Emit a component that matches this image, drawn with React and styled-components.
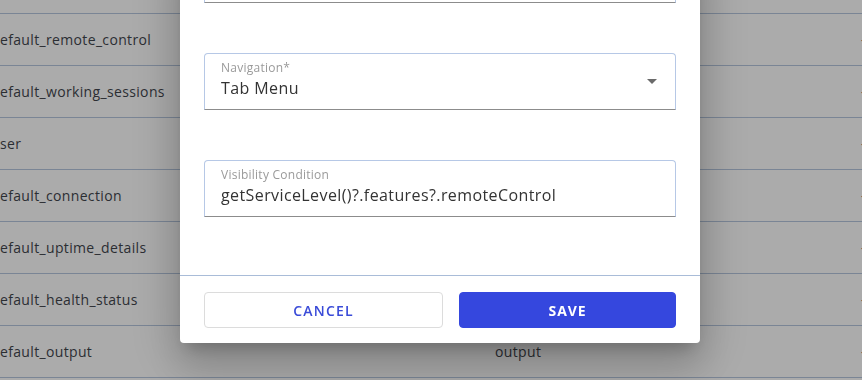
import styled, { createGlobalStyle } from 'styled-components';

const GlobalStyle = createGlobalStyle`
  html, body {
    margin: 0;
    padding: 0;
    height: 380px;
    overflow: hidden;
    background: #ababab;
    font-family: 'Open Sans', 'Noto Sans', sans-serif;
  }
`;

const Table = styled.div`
  margin-top: -38px;
  margin-left: -9px;
  width: 900px;
`;

const Row = styled.div`
  display: grid;
  grid-template-columns: 504px 366px 1fr;
  align-items: center;
  height: 52px;
  box-sizing: border-box;
  border-bottom: 1px solid #7a8595;
  font-size: 14px;
  letter-spacing: 0.35px;
  color: #2b2e33;
`;

const Cell = styled.div`
  white-space: nowrap;
  overflow: hidden;
`;

const Overlay = styled.div`
  position: fixed;
  inset: 0;
  display: flex;
  align-items: flex-end;
  padding: 0 0 37px 180px;
`;

const Dialog = styled.div`
  width: 520px;
  background: #fff;
  border-radius: 0 0 4px 4px;
  box-shadow: 0 11px 15px -7px rgba(0, 0, 0, 0.2),
    0 24px 38px 3px rgba(0, 0, 0, 0.14),
    0 9px 46px 8px rgba(0, 0, 0, 0.12);
`;

const Body = styled.div`
  display: flex;
  flex-direction: column;
  gap: 50px;
  padding: 0 24px 58px;
`;

const Field = styled.div`
  position: relative;
  height: 57px;
  box-sizing: border-box;
  border: 1px solid #b6c8e6;
  border-bottom-color: #8c8c8c;
  border-radius: 4px 4px 0 0;
  padding: 6px 16px 0;
  display: flex;
  flex-direction: column;
`;

const Label = styled.span`
  font-size: 12px;
  line-height: 16px;
  letter-spacing: 0.25px;
  color: #9a9a9a;
`;

const Value = styled.span`
  font-size: 16px;
  line-height: 22px;
  letter-spacing: 0.4px;
  color: #333;
  margin-top: 1px;
`;

const Arrow = styled.span`
  position: absolute;
  right: 18px;
  top: 25px;
  width: 0;
  height: 0;
  border-left: 5px solid transparent;
  border-right: 5px solid transparent;
  border-top: 5px solid #6a6a6a;
`;

const Footer = styled.div`
  display: grid;
  grid-template-columns: 239px 217px;
  justify-content: space-between;
  padding: 16px 24px 15px;
  border-top: 1px solid #a9bcd8;
`;

const Button = styled.button`
  height: 36px;
  border-radius: 4px;
  font-family: 'Open Sans', 'Noto Sans', sans-serif;
  font-size: 14px;
  font-weight: ${p => (p.$primary ? 700 : 600)};
  letter-spacing: ${p => (p.$primary ? '0.9px' : '1.2px')};
  border: 1px solid ${p => (p.$primary ? '#3547de' : '#dcdcdc')};
  background: ${p => (p.$primary ? '#3547de' : '#fff')};
  color: ${p => (p.$primary ? '#fff' : '#3a4bd8')};
`;

const rows = [
  ['', '', ''],
  ['default_remote_control', '', '-'],
  ['default_working_sessions', '', '-'],
  ['user', '', '-'],
  ['default_connection', '', '-'],
  ['default_uptime_details', '', '-'],
  ['default_health_status', '', '-'],
  ['default_output', 'output', '-'],
];

export default function App() {
  return (
    <>
      <GlobalStyle />
      <Table>
        {rows.map((r, i) => (
          <Row key={i}>
            <Cell>{r[0]}</Cell>
            <Cell>{r[1]}</Cell>
            <Cell>{r[2]}</Cell>
          </Row>
        ))}
      </Table>
      <Overlay>
        <Dialog>
          <Body>
            <Field>
              <Label>Page</Label>
              <Value>Remote Control</Value>
            </Field>
            <Field>
              <Label>Navigation*</Label>
              <Value>Tab Menu</Value>
              <Arrow />
            </Field>
            <Field>
              <Label>Visibility Condition</Label>
              <Value>getServiceLevel()?.features?.remoteControl</Value>
            </Field>
          </Body>
          <Footer>
            <Button>CANCEL</Button>
            <Button $primary>SAVE</Button>
          </Footer>
        </Dialog>
      </Overlay>
    </>
  );
}
